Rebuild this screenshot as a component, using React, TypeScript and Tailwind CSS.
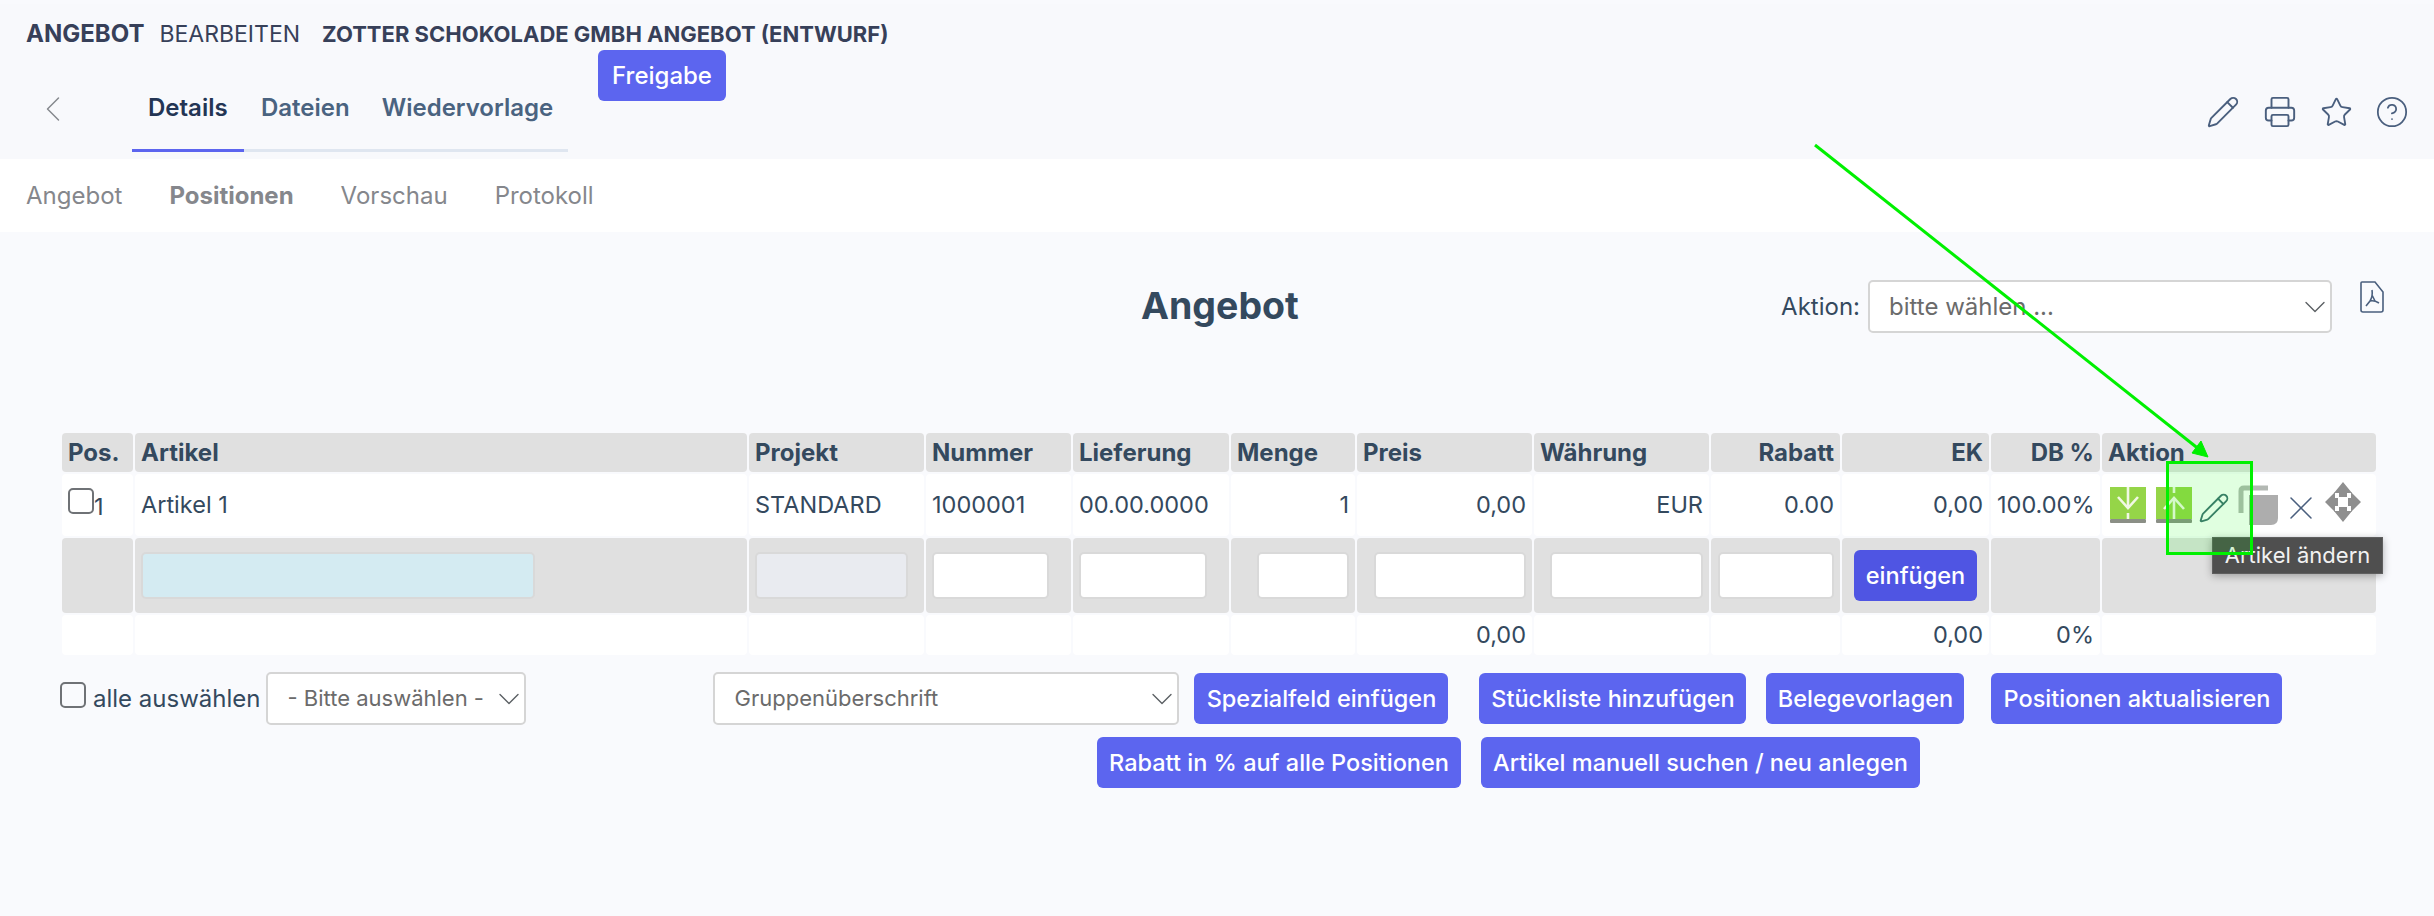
import * as React from "react";
import { ChevronDown, ChevronLeft, CircleHelp, Pencil, Printer, Star, X } from "lucide-react";

const inter = "font-['Inter','Noto_Sans',sans-serif]";

const columns = [
  { name: "Pos.", width: "w-[71px]", align: "text-left" },
  { name: "Artikel", width: "w-[612px]", align: "text-left" },
  { name: "Projekt", width: "w-[175px]", align: "text-left" },
  { name: "Nummer", width: "w-[145px]", align: "text-left" },
  { name: "Lieferung", width: "w-[156px]", align: "text-left" },
  { name: "Menge", width: "w-[124px]", align: "text-left" },
  { name: "Preis", width: "w-[175px]", align: "text-left" },
  { name: "Währung", width: "w-[175px]", align: "text-left" },
  { name: "Rabatt", width: "w-[129px]", align: "text-right" },
  { name: "EK", width: "w-[147px]", align: "text-right" },
  { name: "DB %", width: "w-[109px]", align: "text-right" },
  { name: "Aktion", width: "w-[274px]", align: "text-left" },
];

function Btn({ children, className = "" }: { children: React.ReactNode; className?: string }) {
  return (
    <button
      type="button"
      className={`h-[51px] shrink-0 rounded-[6px] text-center text-[23.5px] font-medium text-white ${className}`}
    >
      {children}
    </button>
  );
}

function Field({ className = "bg-white" }: { className?: string }) {
  return <input className={`block h-[47px] rounded-[5px] border-2 border-[#d9d9d9] ${className}`} />;
}

function Box({ className = "" }: { className?: string }) {
  return (
    <span
      className={`block h-[26px] w-[26px] shrink-0 rounded-[5px] border-2 border-[#6f7276] bg-transparent ${className}`}
    />
  );
}

function SelectBox({ label, className = "" }: { label: string; className?: string }) {
  return (
    <div
      className={`flex h-[53px] shrink-0 items-center justify-between rounded-[5px] border-2 border-[#d5d5d5] bg-white pl-[19px] text-[#6b6b6b] ${className}`}
    >
      <span>{label}</span>
      <ChevronDown className="-mr-[3px] h-[36px] w-[36px] text-[#5b5f63]" strokeWidth={0.9} />
    </div>
  );
}

function GreenArrowIcon({ up = false }: { up?: boolean }) {
  return (
    <svg viewBox="0 0 36 36" className="h-[36px] w-[36px] shrink-0">
      <rect x="0" y="0" width="36" height="32" fill="#95d548" />
      <rect x="0" y="32" width="36" height="4" rx="1" fill="#8b8f86" />
      <g transform={up ? "translate(0 32) scale(1 -1)" : undefined} stroke="#f1f8e4" strokeWidth="2.6" fill="none">
        <path d="M18 0V19" />
        <path d="M8 10L18 21L28 10" />
        <path d="M18 26V32" />
      </g>
    </svg>
  );
}

function CopyIcon() {
  return (
    <svg viewBox="0 0 40 40" className="h-[40px] w-[40px] shrink-0">
      <path d="M3 28V6Q3 3 6 3H30" fill="none" stroke="#b3b8b3" strokeWidth="5" />
      <path d="M11 10H40V33Q40 40 33 40H11Z" fill="#adadad" />
    </svg>
  );
}

function MoveIcon() {
  return (
    <svg viewBox="0 0 36 40" className="h-[40px] w-[36px] shrink-0" fill="#8f8f8f">
      <path d="M18 0L27 11H22V15H14V11H9Z" />
      <path d="M18 40L27 29H22V25H14V29H9Z" />
      <path d="M0 20L10 10V16H13V24H10V30Z" />
      <path d="M36 20L26 10V16H23V24H26V30Z" />
    </svg>
  );
}

function PdfIcon() {
  return (
    <svg viewBox="0 0 24 32" className="h-[32px] w-[24px] shrink-0" fill="none" stroke="#4a5f7e" strokeWidth="1.6">
      <path d="M2 1H15L23 11V29Q23 31 21 31H3Q1 31 1 29V2Q1 1 2 1Z" />
      <path d="M12 9Q13 15 10 20L6 25M10 20Q14 19 19 22M12 14L15 20" />
    </svg>
  );
}

function Th({ children, align }: { children: React.ReactNode; align: string }) {
  return (
    <th className={`h-[39px] rounded-[4px] bg-[#e0e0e0] px-[6px] text-[24px] font-bold text-[#34495e] ${align}`}>
      {children}
    </th>
  );
}

function Td({ children, right = false, className = "" }: { children?: React.ReactNode; right?: boolean; className?: string }) {
  return (
    <td className={`rounded-[4px] bg-white px-[6px] text-[23.5px] text-[#34495e] ${right ? "text-right" : "text-left"} ${className}`}>
      {children}
    </td>
  );
}

function InputTd({ children, className = "" }: { children?: React.ReactNode; className?: string }) {
  return <td className={`rounded-[4px] bg-[#e0e0e0] ${className}`}>{children}</td>;
}

export default function App() {
  return (
    <div className={`relative h-[916px] w-[2434px] overflow-hidden bg-[#f9fafd] ${inter}`}>
      {/* Kopfbereich */}
      <header className="mt-[4px] h-[155px] bg-[#f8f9fc] pl-[26px]">
        <div className="flex h-[58px] items-center pt-[2px] uppercase text-[#374059]">
          <span className="text-[24px] font-bold">Angebot</span>
          <span className="ml-[15px] text-[23px]">Bearbeiten</span>
          <span className="ml-[22px] text-[22px] font-bold">Zotter Schokolade GmbH Angebot (Entwurf)</span>
        </div>
        <div className="flex h-[90px] items-start">
          <ChevronLeft className="ml-[5px] mt-[25px] h-[44px] w-[44px] text-[#85888d]" strokeWidth={0.8} />
          <nav className="ml-[57px] flex h-[90px] w-[436px] border-b-[3px] border-[#dfe6f0] text-[24px] font-semibold">
            <a className="-mb-[3px] h-[90px] w-[112px] border-b-[3px] border-[#5c65ef] pl-[16px] pt-[28px] text-[#233554]">Details</a>
            <a className="ml-[17px] pt-[28px] text-[#4a6380]">Dateien</a>
            <a className="ml-[32px] pt-[28px] text-[#4a6380]">Wiedervorlage</a>
          </nav>
          <Btn className="-mt-[12px] ml-[30px] w-[128px] bg-[#5c65ef] text-[24px]">Freigabe</Btn>
          <div className="ml-auto mr-[25px] mt-[33px] flex items-center gap-[23px] text-[#4a5f7e]">
            <Pencil className="h-[34px] w-[34px]" strokeWidth={1.35} />
            <Printer className="h-[34px] w-[34px]" strokeWidth={1.35} />
            <Star className="h-[33px] w-[33px]" strokeWidth={1.35} />
            <CircleHelp className="-ml-[1px] h-[34px] w-[34px]" strokeWidth={1.25} />
          </div>
        </div>
      </header>

      {/* Reiter */}
      <div className="flex h-[73px] items-center bg-white pl-[26px] pt-[1px] text-[24px] text-[#85878c]">
        <span>Angebot</span>
        <span className="ml-[47px] font-bold">Positionen</span>
        <span className="ml-[47px]">Vorschau</span>
        <span className="ml-[47px]">Protokoll</span>
      </div>

      {/* Kopfzeile Angebot */}
      <div className="mt-[47px] flex h-[55px] items-center">
        <h1 className="ml-[1141px] text-[37.5px] font-bold text-[#34495e]">Angebot</h1>
        <span className="ml-auto text-[24px] text-[#34495e]">Aktion:</span>
        <SelectBox label="bitte wählen ..." className="ml-[8px] w-[464px] text-[24px]" />
        <span className="ml-[28px] mr-[50px] -mt-[19px]">
          <PdfIcon />
        </span>
      </div>

      {/* Positionen */}
      <table className="ml-[60px] mt-[97px] w-[2318px] table-fixed border-separate border-spacing-[2px]">
        <colgroup>
          {columns.map((c) => (
            <col key={c.name} className={c.width} />
          ))}
        </colgroup>
        <thead>
          <tr>
            {columns.map((c) => (
              <Th key={c.name} align={c.align}>
                {c.name}
              </Th>
            ))}
          </tr>
        </thead>
        <tbody>
          <tr className="h-[62px]">
            <Td>
              <div className="flex items-center">
                <Box className="-mt-[8px]" />
                <span className="mt-[4px]">1</span>
              </div>
            </Td>
            <Td>Artikel 1</Td>
            <Td>STANDARD</Td>
            <Td>1000001</Td>
            <Td>00.00.0000</Td>
            <Td right>1</Td>
            <Td right>0,00</Td>
            <Td right>EUR</Td>
            <Td right>0.00</Td>
            <Td right>0,00</Td>
            <Td right>100.00%</Td>
            <Td className="pl-[8px]">
              <div className="flex items-center">
                <GreenArrowIcon />
                <span className="ml-[10px]"><GreenArrowIcon up /></span>
                <Pencil className="ml-[6px] mt-[6px] h-[32px] w-[32px] text-[#3f6f72]" strokeWidth={1.4} />
                <span className="ml-[8px]"><CopyIcon /></span>
                <X className="ml-[3px] mt-[6px] h-[40px] w-[40px] text-[#4a5f7e]" strokeWidth={0.9} />
                <span className="-mt-[6px] ml-[4px]"><MoveIcon /></span>
              </div>
            </Td>
          </tr>
          <tr className="h-[75px]">
            <InputTd />
            <InputTd className="pl-[6px]"><Field className="w-[394px] bg-[#d4ebf2]" /></InputTd>
            <InputTd className="pl-[6px]"><Field className="w-[153px] bg-[#e9ebf0]" /></InputTd>
            <InputTd className="pl-[6px]"><Field className="w-[117px] bg-white" /></InputTd>
            <InputTd className="pl-[6px]"><Field className="w-[128px] bg-white" /></InputTd>
            <InputTd className="pl-[26px]"><Field className="w-[92px] bg-white" /></InputTd>
            <InputTd className="pl-[17px]"><Field className="w-[152px] bg-white" /></InputTd>
            <InputTd className="pl-[16px]"><Field className="w-[153px] bg-white" /></InputTd>
            <InputTd className="pl-[7px]"><Field className="w-[116px] bg-white" /></InputTd>
            <InputTd className="pl-[12px]">
              <Btn className="w-[123px] bg-[#4f55e3]">einfügen</Btn>
            </InputTd>
            <InputTd />
            <InputTd />
          </tr>
          <tr className="h-[40px]">
            <Td />
            <Td />
            <Td />
            <Td />
            <Td />
            <Td />
            <Td right>0,00</Td>
            <Td />
            <Td />
            <Td right>0,00</Td>
            <Td right>0%</Td>
            <Td />
          </tr>
        </tbody>
      </table>

      {/* Aktionen unter der Tabelle */}
      <div className="mt-[15px] flex h-[53px] items-center text-[22px] text-[#34495e]">
        <Box className="-mt-[8px] ml-[60px]" />
        <span className="ml-[7px] text-[24px]">alle auswählen</span>
        <SelectBox label="- Bitte auswählen -" className="ml-[6px] w-[260px]" />
        <SelectBox label="Gruppenüberschrift" className="ml-[187px] w-[466px]" />
        <Btn className="ml-[15px] w-[254px] bg-[#5c65ef]">Spezialfeld einfügen</Btn>
        <Btn className="ml-[31px] w-[267px] bg-[#5c65ef]">Stückliste hinzufügen</Btn>
        <Btn className="ml-[20px] w-[198px] bg-[#5c65ef]">Belegevorlagen</Btn>
        <Btn className="ml-[27px] w-[291px] bg-[#5c65ef]">Positionen aktualisieren</Btn>
      </div>
      <div className="mt-[12px] flex pl-[1097px]">
        <Btn className="w-[364px] bg-[#5c65ef]">Rabatt in % auf alle Positionen</Btn>
        <Btn className="ml-[20px] w-[439px] bg-[#5c65ef]">Artikel manuell suchen / neu anlegen</Btn>
      </div>

      {/* Tooltip */}
      <div className="absolute left-[2212px] top-[537px] flex h-[37px] w-[171px] items-center justify-center border border-[#5f5f5f] bg-[#4f4f4f] text-[22px] text-[#f2f2f2] shadow-[0_2px_8px_rgba(0,0,0,0.3)]">
        Artikel ändern
      </div>

      {/* Anmerkung im Screenshot */}
      <div className="absolute left-[2166px] top-[461px] h-[94px] w-[87px] border-[3px] border-[#00f000] bg-[#00ff00]/[0.12]" />
      <svg className="absolute left-0 top-0 h-[916px] w-[2434px]" viewBox="0 0 2434 916" fill="none">
        <path d="M1815 145L2200 450" stroke="#00f000" strokeWidth="3" />
        <path d="M2208 457L2201 441L2192 453Z" fill="#00f000" stroke="#00f000" strokeWidth="1" />
      </svg>
    </div>
  );
}
